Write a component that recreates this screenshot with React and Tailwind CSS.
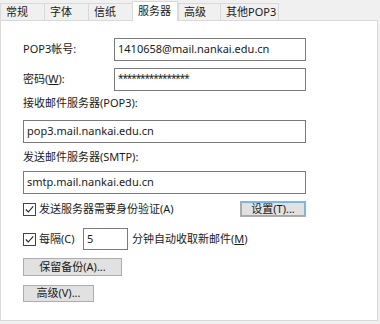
import React from "react";

const font = { fontFamily: '"Noto Sans", "Noto Sans CJK SC", sans-serif' };

const tabs = [
  { label: "常规", w: "w-[45px]" },
  { label: "字体", w: "w-[45px]" },
  { label: "信纸", w: "w-[45px]" },
  { label: "服务器", w: "w-[46px]", active: true },
  { label: "高级", w: "w-[43px]" },
  { label: "其他POP3", w: "w-[59px]" },
];

const Tab = ({ label, active, w }) =>
  active ? (
    <div className={`relative z-10 -mb-px mt-[1px] h-[20px] ${w} border border-b-0 border-[#d9d9d9] bg-white pl-[5px] leading-[18px]`}>
      {label}
    </div>
  ) : (
    <div className={`mt-[3px] h-[17px] ${w} -mr-px border border-b-0 border-[#d9d9d9] bg-[#f0f0f0] pl-[5px] leading-[16px]`}>
      {label}
    </div>
  );

const Check = () => (
  <span className="flex h-[13px] w-[13px] items-center justify-center border border-[#444] bg-white">
    <svg width="11" height="11" viewBox="0 0 11 11">
      <polyline points="1.8,5.5 4.3,8 9.2,2.4" fill="none" stroke="#222" strokeWidth="1.1" />
    </svg>
  </span>
);

const Field = ({ children, className }) => (
  <div className={`flex items-center border border-[#7a7a7a] bg-white px-[3px] ${className}`}>
    {children}
  </div>
);

const Btn = ({ children, className }) => (
  <div className={`flex items-center justify-center border border-[#adadad] bg-[#e1e1e1] ${className}`}>
    {children}
  </div>
);

export default function App() {
  return (
    <div className="h-[324px] w-[380px] bg-[#f0f0f0] text-[11px] text-[#1a1a1a]" style={font}>
      <div className="flex h-[20px] items-start">
        {tabs.map((t) => (
          <Tab key={t.label} {...t} />
        ))}
      </div>
      <div className="h-[301px] w-[378px] border border-[#d9d9d9] bg-white pl-[22px] pt-[17px]">
        <div className="flex h-[23px] items-center">
          <span className="w-[91px]">POP3帐号:</span>
          <Field className="h-[23px] w-[192px]">1410658@mail.nankai.edu.cn</Field>
        </div>
        <div className="mt-[7px] flex h-[23px] items-center">
          <span className="w-[91px]">
            密码(<span className="underline">W</span>):
          </span>
          <Field className="h-[23px] w-[192px]">
            <span className="-mt-[3px] text-[10px] tracking-[-1.1px]">****************</span>
          </Field>
        </div>
        <div className="mt-[4px] leading-[16px]">接收邮件服务器(POP3):</div>
        <Field className="mt-[9px] h-[23px] w-[283px]">pop3.mail.nankai.edu.cn</Field>
        <div className="mt-[6px] leading-[16px]">发送邮件服务器(SMTP):</div>
        <Field className="mt-[6px] h-[23px] w-[283px]">smtp.mail.nankai.edu.cn</Field>
        <div className="mt-[7px] flex h-[16px] items-center">
          <Check />
          <span className="ml-[3px] w-[201px]">发送服务器需要身份验证(A)</span>
          <Btn className="h-[16px] w-[66px] border-[#2f7fd0] shadow-[inset_0_0_0_1px_#7ab3e8]">设置(T)...</Btn>
        </div>
        <div className="mt-[11px] flex h-[22px] items-center">
          <Check />
          <span className="ml-[3px] w-[44px]">每隔(C)</span>
          <Field className="h-[22px] w-[45px]">5</Field>
          <span className="ml-[4px]">
            分钟自动收取新邮件(<span className="underline">M</span>)
          </span>
        </div>
        <Btn className="mt-[8px] h-[18px] w-[99px]">保留备份(A)...</Btn>
        <Btn className="mt-[9px] h-[17px] w-[71px]">高级(V)...</Btn>
      </div>
    </div>
  );
}
